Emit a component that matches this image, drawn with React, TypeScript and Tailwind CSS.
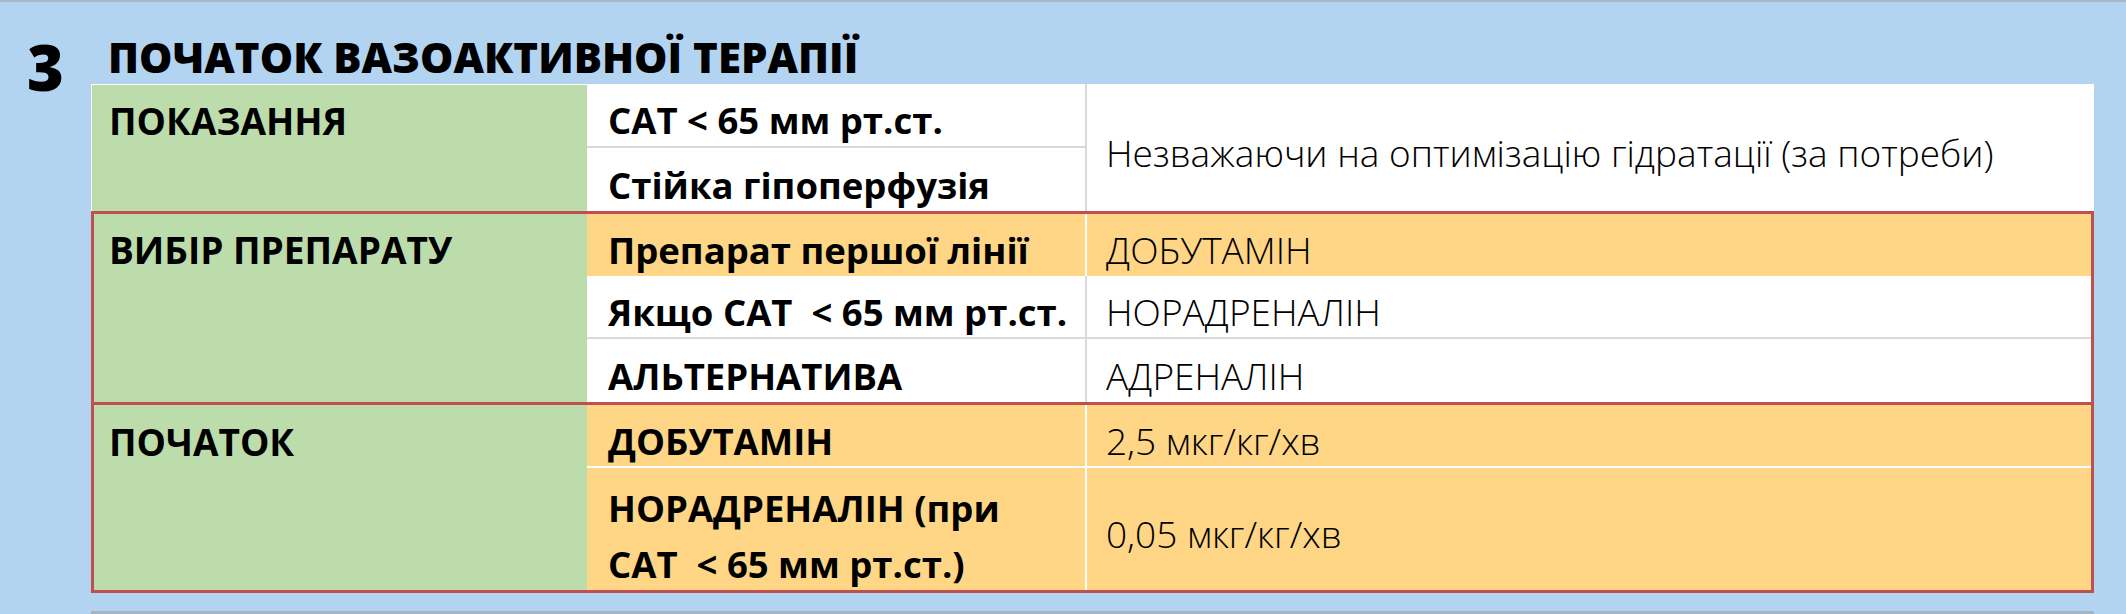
import type { ReactNode } from "react";

// Slide: step 3 of the vasoactive therapy protocol.

const GREEN = "bg-[#bddcab]";

function Label({ children, h }: { children: ReactNode; h: string }) {
	return (
		<div className={`${h} flex items-center pt-[10px] pl-[15px] font-bold text-[37px]`}>{children}</div>
	);
}

function Row({
	h,
	bg,
	bottom,
	sep,
	left,
	right,
	leftClass = "pt-[10px]",
}: {
	h: string;
	bg: string;
	bottom?: string;
	sep: string;
	left: ReactNode;
	right: ReactNode;
	leftClass?: string;
}) {
	return (
		<div className={`flex ${h} ${bg} ${bottom ?? ""}`}>
			<div className={`w-[498px] shrink-0 flex items-center pl-[21px] font-bold whitespace-pre ${leftClass}`}>
				{left}
			</div>
			<div className={`flex-1 flex items-center pt-[10px] pl-[19px] font-light text-[37px] border-l-2 ${sep}`}>
				{right}
			</div>
		</div>
	);
}

export default function App() {
	return (
		<div className="w-[2126px] h-[614px] overflow-hidden flex bg-[#b2d4f0] border-t-2 border-[#a6b9cb] text-black font-['Open_Sans',sans-serif]">
			<div className="w-[91px] shrink-0 pl-[27px] pt-[33px] text-[63px] leading-[63px] font-extrabold">3</div>

			<div className="w-[2003px] shrink-0 flex flex-col text-[36.5px] leading-[36px]">
				<h1 className="h-[82px] shrink-0 pl-[17px] pt-[34px] text-[42px] leading-[42px] font-extrabold">
					ПОЧАТОК ВАЗОАКТИВНОЇ ТЕРАПІЇ
				</h1>

				{/* indications */}
				<div className="flex h-[127px] shrink-0 bg-white">
					<div className={`w-[496px] shrink-0 ${GREEN} border-t border-l border-white pl-[2px]`}>
						<Label h="h-[62px]">ПОКАЗАННЯ</Label>
					</div>
					<div className="w-[498px] shrink-0 flex flex-col font-bold">
						<div className="h-[64px] flex items-center pt-[10px] pl-[21px] border-b-2 border-[#d9d9d9]">
							САТ &lt; 65 мм рт.ст.
						</div>
						<div className="h-[63px] flex items-center pt-[10px] pl-[21px]">Стійка гіпоперфузія</div>
					</div>
					<div className="flex-1 flex items-center pt-[10px] pl-[19px] font-light text-[37px] border-l-2 border-[#d9d9d9]">
						Незважаючи на оптимізацію гідратації (за потреби)
					</div>
				</div>

				<div className="shrink-0 border-[3px] border-[#c0504d]">
					{/* drug choice */}
					<div className="flex h-[188px]">
						<div className={`w-[493px] shrink-0 ${GREEN}`}>
							<Label h="h-[62px]">ВИБІР ПРЕПАРАТУ</Label>
						</div>
						<div className="flex-1 flex flex-col">
							<Row h="h-[62px]" bg="bg-[#fed686]" sep="border-white" left="Препарат першої лінії" right="ДОБУТАМІН" />
							<Row
								h="h-[63px]"
								bg="bg-white"
								bottom="border-b-2 border-[#d9d9d9]"
								sep="border-[#d9d9d9]"
								left="Якщо САТ  < 65 мм рт.ст."
								right="НОРАДРЕНАЛІН"
							/>
							<Row h="h-[63px]" bg="bg-white" sep="border-[#d9d9d9]" left="АЛЬТЕРНАТИВА" right="АДРЕНАЛІН" />
						</div>
					</div>

					{/* start doses */}
					<div className="flex h-[188px] border-t-[3px] border-[#c0504d]">
						<div className={`w-[493px] shrink-0 ${GREEN}`}>
							<Label h="h-[63px]">ПОЧАТОК</Label>
						</div>
						<div className="flex-1 flex flex-col">
							<Row
								h="h-[63px]"
								bg="bg-[#fed686]"
								bottom="border-b-2 border-white"
								sep="border-white"
								left="ДОБУТАМІН"
								right="2,5 мкг/кг/хв"
							/>
							<Row
								h="h-[122px]"
								bg="bg-[#fed686]"
								sep="border-white"
								leftClass="pt-[14px] leading-[56px]"
								left={
									<span>
										НОРАДРЕНАЛІН (при
										<br />
										САТ  &lt; 65 мм рт.ст.)
									</span>
								}
								right="0,05 мкг/кг/хв"
							/>
						</div>
					</div>
				</div>

				<div className="mt-[18px] h-[3px] shrink-0 bg-[#a3b4c4]" />
			</div>
		</div>
	);
}
